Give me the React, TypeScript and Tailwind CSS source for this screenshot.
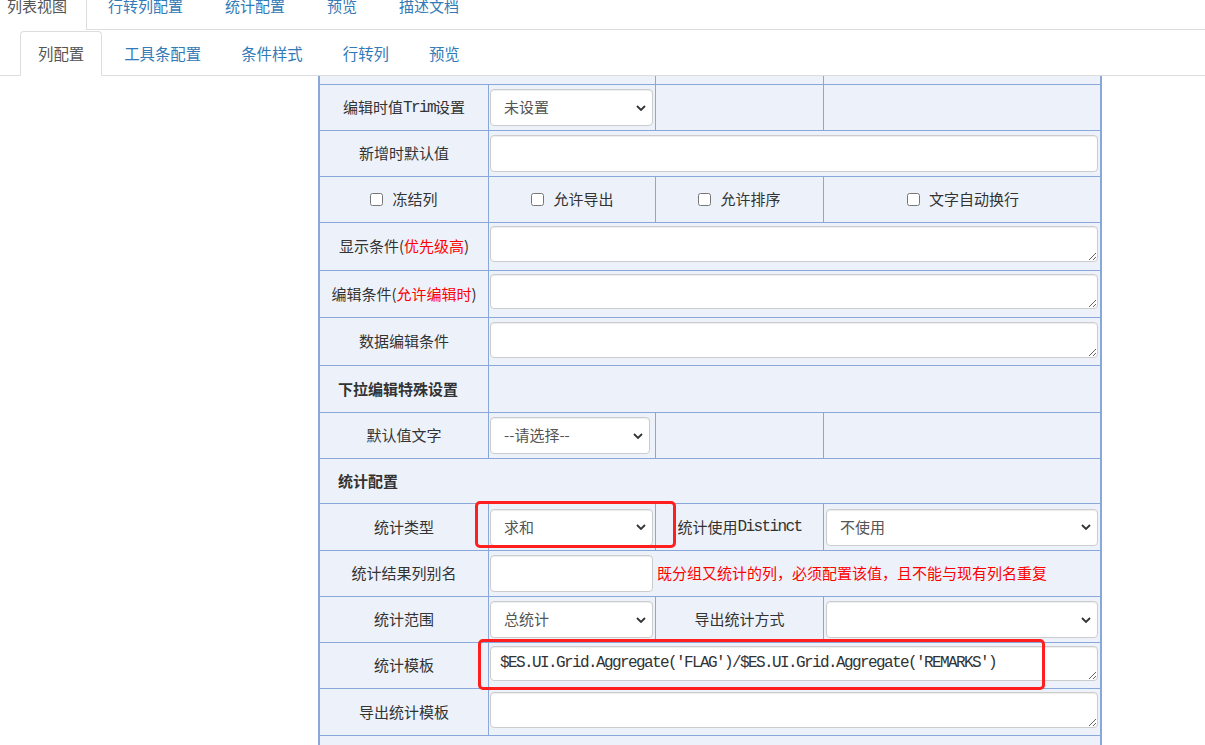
import React from 'react';

const line = 'border-[#89a7d9]';
const mono = "font-['Liberation_Mono',monospace] text-[16px] tracking-[-1.6px]";

const Chevron = () => (
  <svg
    width="10"
    height="6"
    viewBox="0 0 10 6"
    className="absolute right-[7px] top-1/2 -translate-y-1/2 pointer-events-none"
  >
    <polyline points="1,1 5,5 9,1" fill="none" stroke="#333" strokeWidth="1.8" />
  </svg>
);

const Select = ({ value, width }: { value: string; width: string }) => (
  <div className={`relative h-[37px] ${width}`}>
    <select
      defaultValue={value}
      className="appearance-none w-full h-full border border-[#ccc] rounded-[4px] bg-white pl-[13px] text-[15px] text-[#555] outline-none shadow-[inset_0_1px_1px_rgba(0,0,0,0.075)]"
    >
      <option value={value}>{value}</option>
    </select>
    <Chevron />
  </div>
);

const TextArea = ({ value = '', isMono = false, h = 'h-[36px]' }: { value?: string; isMono?: boolean; h?: string }) => (
  <textarea
    defaultValue={value}
    className={`block w-[608px] ${h} border border-[#ccc] rounded-[4px] bg-white text-[#333] pl-[9px] pt-[5px] outline-none shadow-[inset_0_1px_1px_rgba(0,0,0,0.075)] ${
      isMono ? `${mono} leading-[22px]` : 'text-[15px]'
    }`}
  />
);

const Check = ({ label }: { label: string }) => (
  <label className="flex items-center gap-[9px] text-[15px] text-[#333]">
    <input type="checkbox" className="m-0 w-[13px] h-[13px]" />
    <span>{label}</span>
  </label>
);

const Row = ({ h, children }: { h: string; children?: React.ReactNode }) => (
  <div className={`flex border-b ${line} ${h}`}>{children}</div>
);

const Label = ({ children }: { children: React.ReactNode }) => (
  <div className="w-[168px] flex items-center justify-center text-[15px] text-[#333] whitespace-nowrap">{children}</div>
);

const Title = ({ children, w = 'w-[168px]' }: { children: React.ReactNode; w?: string }) => (
  <div className={`${w} flex items-center pl-[18px] text-[15px] font-bold text-[#333]`}>{children}</div>
);

const c2 = `w-[167px] border-l ${line} flex items-center pl-[1px]`;
const c3 = `w-[168px] border-l ${line} flex items-center justify-center text-[15px] text-[#333] whitespace-nowrap`;
const c4 = `w-[277px] border-l ${line} flex items-center pl-[2px]`;
const wide = `w-[612px] border-l ${line} flex items-center pl-[1px]`;
const wideTop = `w-[612px] border-l ${line} pl-[1px]`;

export default function App() {
  return (
    <div className="relative w-[1205px] h-[745px] overflow-hidden bg-white font-['Noto_Sans_CJK_SC','Microsoft_YaHei',sans-serif]">
      {/* top tabs */}
      <div className="flex h-[30px] border-b border-[#ddd] text-[15px]">
        <div className="-mb-px h-[30px] pl-[7px] pr-[19px] border-r border-[#ddd] bg-white text-[#555]">
          <span className="block -mt-[2px] leading-[16px]">列表视图</span>
        </div>
        {['行转列配置', '统计配置', '预览', '描述文档'].map(t => (
          <div key={t} className="px-[21px] text-[#337ab7]">
            <span className="block -mt-[2px] leading-[16px]">{t}</span>
          </div>
        ))}
      </div>

      {/* sub tabs */}
      <div className="flex items-end h-[46px] border-b border-[#ddd] pl-[20px] text-[15.4px]">
        {['列配置', '工具条配置', '条件样式', '行转列', '预览'].map((t, i) => (
          <div
            key={t}
            className={`-mb-px h-[45px] mr-[4px] px-[17px] flex items-center rounded-t-[4px] border ${
              i === 0 ? 'border-[#ddd] border-b-white bg-white text-[#555]' : 'border-transparent text-[#337ab7]'
            }`}
          >
            {t}
          </div>
        ))}
      </div>

      {/* form table */}
      <div className="flex pl-[318px] h-[669px]">
        <div className={`w-[784px] h-full border-x-2 ${line} bg-[#edf2fa]`}>
          <Row h="h-[9px]">
            <div className="w-[335px]" />
            <div className={`w-[168px] border-l ${line}`} />
            <div className={`w-[277px] border-l ${line}`} />
          </Row>

          <Row h="h-[46px]">
            <Label>
              编辑时值<span className={mono}>Trim</span>设置
            </Label>
            <div className={c2}><Select value="未设置" width="w-[163px]" /></div>
            <div className={c3} />
            <div className={c4} />
          </Row>

          <Row h="h-[46px]">
            <Label>新增时默认值</Label>
            <div className={wide}>
              <input className="w-[608px] h-[37px] border border-[#ccc] rounded-[4px] bg-white shadow-[inset_0_1px_1px_rgba(0,0,0,0.075)]" />
            </div>
          </Row>

          <Row h="h-[46px]">
            <div className="w-[168px] flex items-center justify-center"><Check label="冻结列" /></div>
            <div className={`${c2} justify-center`}><Check label="允许导出" /></div>
            <div className={c3}><Check label="允许排序" /></div>
            <div className={`${c4} justify-center`}><Check label="文字自动换行" /></div>
          </Row>

          <Row h="h-[48px]">
            <Label>
              显示条件(<span className="text-[#f00]">优先级高</span>)
            </Label>
            <div className={`${wideTop} pt-[3px]`}><TextArea /></div>
          </Row>

          <Row h="h-[47px]">
            <Label>
              编辑条件(<span className="text-[#f00]">允许编辑时</span>)
            </Label>
            <div className={`${wideTop} pt-[3px]`}><TextArea h="h-[35px]" /></div>
          </Row>

          <Row h="h-[48px]">
            <Label>数据编辑条件</Label>
            <div className={`${wideTop} pt-[4px]`}><TextArea /></div>
          </Row>

          <Row h="h-[47px]">
            <Title>下拉编辑特殊设置</Title>
            <div className={`w-[612px] border-l ${line}`} />
          </Row>

          <Row h="h-[46px]">
            <Label>默认值文字</Label>
            <div className={c2}><Select value="--请选择--" width="w-[160px]" /></div>
            <div className={c3} />
            <div className={c4} />
          </Row>

          <Row h="h-[45px]">
            <Title w="w-[780px]">统计配置</Title>
          </Row>

          <Row h="h-[47px]">
            <Label>统计类型</Label>
            <div className={c2}><Select value="求和" width="w-[163px]" /></div>
            <div className={c3}>
              统计使用<span className={mono}>Distinct</span>
            </div>
            <div className={c4}><Select value="不使用" width="w-[272px]" /></div>
          </Row>

          <Row h="h-[46px]">
            <Label>统计结果列别名</Label>
            <div className={c2}>
              <input className="w-[163px] h-[37px] border border-[#ccc] rounded-[4px] bg-white shadow-[inset_0_1px_1px_rgba(0,0,0,0.075)]" />
            </div>
            <div className="w-[445px] flex items-center pl-[2px] text-[15px] text-[#f00] whitespace-nowrap">
              既分组又统计的列，必须配置该值，且不能与现有列名重复
            </div>
          </Row>

          <Row h="h-[46px]">
            <Label>统计范围</Label>
            <div className={c2}><Select value="总统计" width="w-[163px]" /></div>
            <div className={c3}>导出统计方式</div>
            <div className={c4}><Select value="" width="w-[272px]" /></div>
          </Row>

          <Row h="h-[46px]">
            <Label>统计模板</Label>
            <div className={`${wideTop} pt-[3px]`}>
              <TextArea isMono h="h-[35px]" value="$ES.UI.Grid.Aggregate('FLAG')/$ES.UI.Grid.Aggregate('REMARKS')" />
            </div>
          </Row>

          <Row h="h-[47px]">
            <Label>导出统计模板</Label>
            <div className={`${wideTop} pt-[3px]`}><TextArea /></div>
          </Row>
        </div>
      </div>

      {/* annotation boxes */}
      <div className="absolute left-[475px] top-[501px] w-[201px] h-[47px] border-[3px] border-[#ff1f1f] rounded-[5px] pointer-events-none" />
      <div className="absolute left-[478px] top-[639px] w-[567px] h-[51px] border-[3px] border-[#ff1f1f] rounded-[5px] pointer-events-none" />
    </div>
  );
}
